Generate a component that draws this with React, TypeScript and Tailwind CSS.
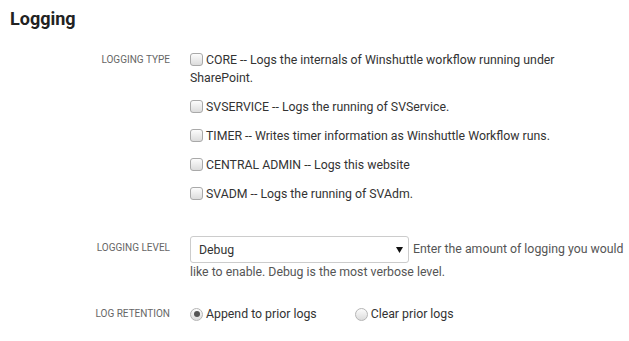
import React from "react";

const logTypes = [
  "CORE -- Logs the internals of Winshuttle workflow running under SharePoint.",
  "SVSERVICE -- Logs the running of SVService.",
  "TIMER -- Writes timer information as Winshuttle Workflow runs.",
  "CENTRAL ADMIN -- Logs this website",
  "SVADM -- Logs the running of SVAdm.",
];

const Checkbox = () => (
  <span className="mr-[3px] inline-block h-[13px] w-[13px] rounded-[3px] border border-[#a9a9a9] bg-gradient-to-b from-[#fcfcfc] to-[#dcdcdc] align-[-2px]" />
);

const Radio = ({ checked }: { checked?: boolean }) => (
  <span className="flex h-[13px] w-[13px] shrink-0 items-center justify-center rounded-full border border-[#b5b5b5] bg-gradient-to-b from-[#fcfcfc] to-[#dcdcdc]">
    {checked && <span className="h-[6px] w-[6px] rounded-full bg-[#555]" />}
  </span>
);

const Label = ({ children }: { children: React.ReactNode }) => (
  <div className="w-[160px] shrink-0 text-right text-[10px] leading-[18px] uppercase text-[#666]">
    {children}
  </div>
);

export default function App() {
  return (
    <div className="min-h-screen bg-white pl-[10px] pt-[7px] font-['Roboto',sans-serif] text-[12.3px] leading-[18px] text-[#333]">
      <h1 className="text-[18px] leading-[24px] font-bold text-[#222]">Logging</h1>

      <div className="mt-[20px] flex">
        <Label>Logging Type</Label>
        <div className="ml-[20px] flex w-[375px] flex-col gap-[11px]">
          {logTypes.map((t) => (
            <label key={t} className="block">
              <Checkbox />
              {t}
            </label>
          ))}
        </div>
      </div>

      <div className="mt-[33px] flex">
        <Label>
          <span className="inline-block pt-[3px]">Logging Level</span>
        </Label>
        <div className="ml-[20px] w-[439px] text-[#555]">
          <span className="mr-[4px] inline-flex h-[27px] w-[219px] items-center justify-between rounded-[3px] border border-[#ccc] bg-white pl-[8px] pr-[5px] align-middle text-[#333]">
            <span>Debug</span>
            <svg width="7" height="6" viewBox="0 0 7 6">
              <path d="M0 0 H7 L3.5 6 Z" fill="#111" />
            </svg>
          </span>
          Enter the amount of logging you would like to enable. Debug is the most verbose level.
        </div>
      </div>

      <div className="mt-[24px] flex items-center">
        <Label>Log Retention</Label>
        <div className="ml-[20px] flex items-center">
          <label className="flex items-center gap-[3px]">
            <Radio checked />
            <span>Append to prior logs</span>
          </label>
          <label className="ml-[38px] flex items-center gap-[3px]">
            <Radio />
            <span>Clear prior logs</span>
          </label>
        </div>
      </div>
    </div>
  );
}
